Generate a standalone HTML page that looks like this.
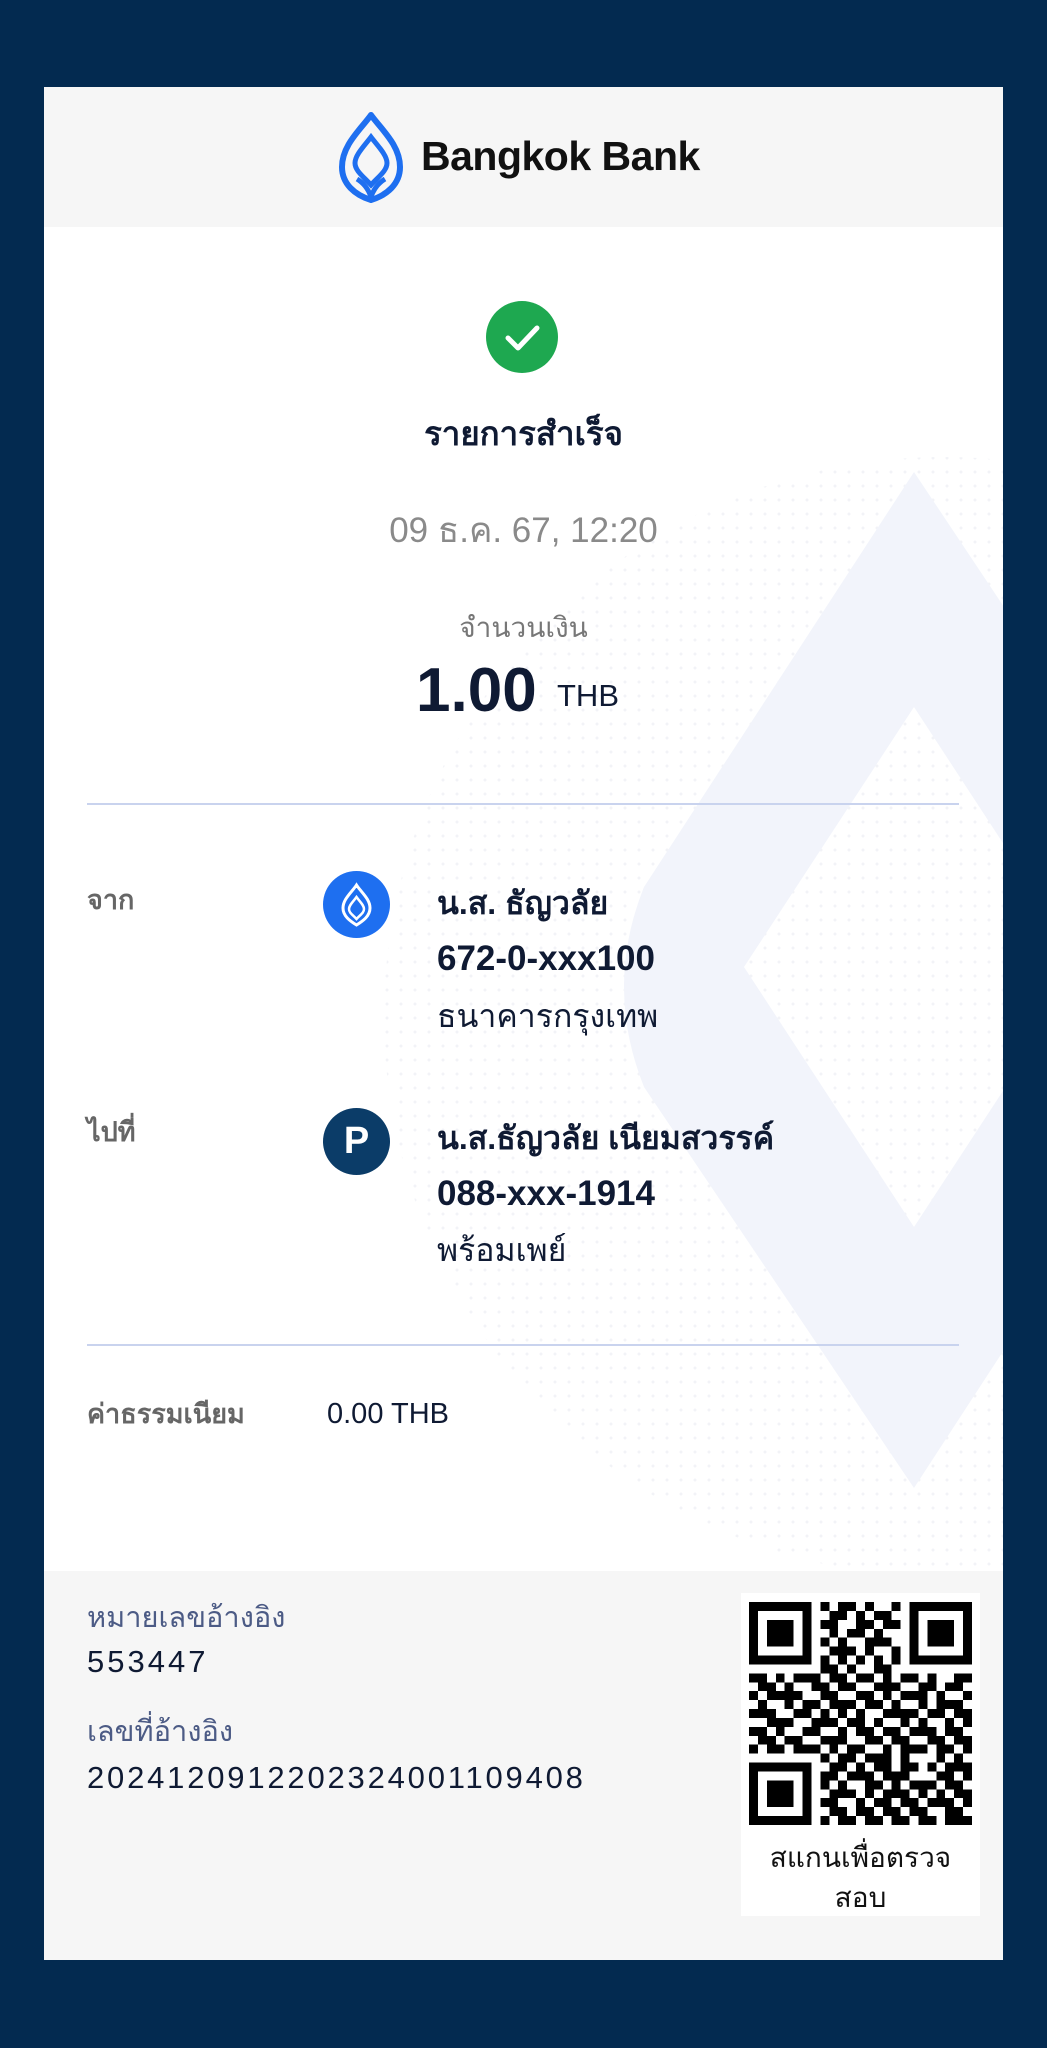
<!DOCTYPE html>
<html><head><meta charset="utf-8">
<style>
*{margin:0;padding:0;box-sizing:border-box}
html,body{width:1047px;height:2048px;background:#032a50;overflow:hidden;font-family:"Liberation Sans","DejaVu Sans",sans-serif}
.card{position:absolute;left:44px;top:87px;width:959px;height:1873px;background:#fff;overflow:hidden}
.hdr{position:absolute;left:0;top:0;width:959px;height:140px;background:#f6f6f6}
.abs{position:absolute;white-space:nowrap}
.c{left:0;width:959px;text-align:center}
.foot{position:absolute;left:0;top:1484px;width:959px;height:389px;background:#f6f6f6}
.dark{color:#0f1a33}
</style></head><body>
<div class="card">
  <svg class="abs" style="left:0;top:0" width="959" height="1873">
    <defs><pattern id="d" width="14" height="14" patternUnits="userSpaceOnUse"><circle cx="7" cy="7" r="1.5" fill="#eceef4"/></pattern></defs>
    <circle cx="900" cy="930" r="560" fill="url(#d)" opacity="0.7"/>
    <path d="M870 385 L1040 640 L1040 880 L870 620 L700 880 L870 1140 L1040 880 L1040 1140 L870 1401 L600 1000 Q560 900 600 800 Z" fill="#f2f4fb"/>
  </svg>
  <div class="hdr"></div>
  <svg class="abs" style="left:293px;top:24px" width="68" height="92" viewBox="0 0 68 92">
    <path d="M34 4 C24 18 5 34 5 56 C5 73 18 84 34 89 C50 84 63 73 63 56 C63 34 44 18 34 4Z" fill="none" stroke="#1e6ff0" stroke-width="6" stroke-linejoin="round"/>
    <path d="M34 26 C28 34 18 44 18 52 C18 60 27 66 34 74 C41 66 50 60 50 52 C50 44 40 34 34 26Z" fill="none" stroke="#1e6ff0" stroke-width="5"/>
    <path d="M20 68 Q30 74 34 86 Q38 74 48 68" fill="none" stroke="#1e6ff0" stroke-width="5"/>
  </svg>
  <div class="abs" style="left:377px;top:46px;font-size:41px;font-weight:bold;color:#111;letter-spacing:-0.5px">Bangkok Bank</div>

  <div class="abs" style="left:442px;top:214px;width:72px;height:72px;border-radius:50%;background:#1ea850"></div>
  <svg class="abs" style="left:442px;top:214px" width="72" height="72"><path d="M22 37 L32 47 L51 27" fill="none" stroke="#fff" stroke-width="5" stroke-linecap="round" stroke-linejoin="round"/></svg>

  <div class="abs c dark" style="top:325px;font-size:33px;font-weight:bold;line-height:44px">รายการสำเร็จ</div>
  <div class="abs c" style="top:421px;font-size:35px;color:#8a8a8a;line-height:46px">09 ธ.ค. 67, 12:20</div>
  <div class="abs c" style="top:522px;font-size:28px;color:#777;line-height:38px">จำนวนเงิน</div>
  <div class="abs dark" style="left:372px;top:573px;font-size:62px;font-weight:bold;line-height:62px">1.00</div>
  <div class="abs dark" style="left:513px;top:592px;font-size:31px;line-height:34px">THB</div>

  <div class="abs" style="left:43px;top:716px;width:872px;height:2px;background:#c9d3ee"></div>

  <div class="abs" style="left:43px;top:795px;font-size:27px;color:#666;font-weight:bold;line-height:36px">จาก</div>
  <div class="abs" style="left:279px;top:784px;width:67px;height:67px;border-radius:50%;background:#1e6ff0"></div>
  <svg class="abs" style="left:279px;top:784px" width="67" height="67" viewBox="0 0 67 67"><path d="M33.5 14 C29 21 20 28 20 37 C20 45 27 50 33.5 54 C40 50 47 45 47 37 C47 28 38 21 33.5 14Z" fill="none" stroke="#fff" stroke-width="3"/><path d="M33.5 26 C30 31 26 34 26 38 C26 42 30 44 33.5 48 C37 44 41 42 41 38 C41 34 37 31 33.5 26Z" fill="none" stroke="#fff" stroke-width="2.5"/></svg>
  <div class="abs dark" style="left:393px;top:794px;font-size:32px;font-weight:bold;line-height:44px">น.ส. ธัญวลัย</div>
  <div class="abs dark" style="left:393px;top:850px;font-size:35px;font-weight:bold;line-height:44px">672-0-xxx100</div>
  <div class="abs dark" style="left:393px;top:907px;font-size:32px;line-height:44px">ธนาคารกรุงเทพ</div>

  <div class="abs" style="left:43px;top:1027px;font-size:27px;color:#666;font-weight:bold;line-height:36px">ไปที่</div>
  <div class="abs" style="left:279px;top:1021px;width:67px;height:67px;border-radius:50%;background:#0b3c68;color:#fff;font-size:38px;font-weight:bold;text-align:center;line-height:67px">P</div>
  <div class="abs dark" style="left:393px;top:1029px;font-size:32px;font-weight:bold;line-height:44px">น.ส.ธัญวลัย เนียมสวรรค์</div>
  <div class="abs dark" style="left:393px;top:1085px;font-size:35px;font-weight:bold;line-height:44px">088-xxx-1914</div>
  <div class="abs dark" style="left:393px;top:1141px;font-size:32px;line-height:44px">พร้อมเพย์</div>

  <div class="abs" style="left:43px;top:1257px;width:872px;height:2px;background:#c9d3ee"></div>

  <div class="abs" style="left:43px;top:1309px;font-size:27px;color:#666;font-weight:bold;line-height:36px">ค่าธรรมเนียม</div>
  <div class="abs dark" style="left:283px;top:1309px;font-size:29px;line-height:36px">0.00 THB</div>

  <div class="foot"></div>
  <div class="abs" style="left:43px;top:1512px;font-size:29px;color:#4c5b85;line-height:38px">หมายเลขอ้างอิง</div>
  <div class="abs dark" style="left:43px;top:1556px;font-size:31px;line-height:38px;letter-spacing:3px">553447</div>
  <div class="abs" style="left:43px;top:1626px;font-size:29px;color:#4c5b85;line-height:38px">เลขที่อ้างอิง</div>
  <div class="abs dark" style="left:43px;top:1672px;font-size:31px;line-height:38px;letter-spacing:2.8px">2024120912202324001109408</div>

  <div class="abs" style="left:697px;top:1506px;width:239px;height:323px;background:#fff"></div>
  <svg id="qr" class="abs" style="left:705px;top:1515px" width="223" height="223" viewBox="0 0 25 25" shape-rendering="crispEdges"></svg>
  <div class="abs" style="left:697px;top:1751px;width:239px;text-align:center;font-size:28px;color:#111;line-height:40px;white-space:normal">สแกนเพื่อตรวจ<br>สอบ</div>
</div>
<script>
var rows=["1111111010110100101111111","1000001001101011001000001","1011101011001101101011101","1011101001011010001011101","1011101010100111001011101","1000001001110100101000001","1111111010101010101111111","0000000011010011000000000","1101011101101101011010011","0110100110110011100110110","1011110011001101011101001","0100101101110110100101110","1110011010101001111011011","0011100111011010010100101","1101001100101101101110110","0110110011100110110011011","1011011101011001011101101","0000000010110111010001010","1111111001101011011010111","1000001011011101110001101","1011101010100110101110110","1011101001110101110101011","1011101011001011011011101","1000001001101101101100110","1111111010110110110110111"];
var s="";for(var r=0;r<25;r++){for(var c=0;c<25;c++){if(rows[r][c]=="1")s+='<rect x="'+c+'" y="'+r+'" width="1" height="1"/>';}}
document.getElementById("qr").innerHTML=s;
</script>
</body></html>
